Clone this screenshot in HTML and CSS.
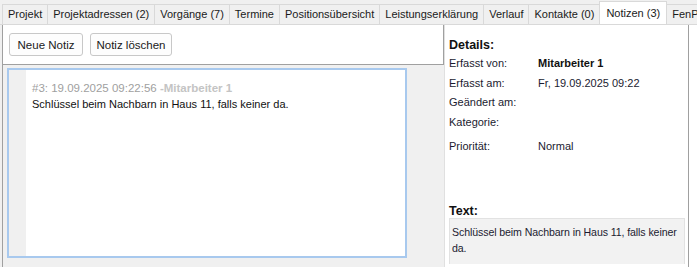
FILE: index.html
```html
<!DOCTYPE html>
<html lang="de">
<head>
    <meta charset="UTF-8">
    <title>Notizen</title>
    <link rel="stylesheet" href="styles.css">
</head>
<body>
    <div class="tabs">
        <div class="tab">Projekt</div>
        <div class="tab">Projektadressen (2)</div>
        <div class="tab">Vorgänge (7)</div>
        <div class="tab">Termine</div>
        <div class="tab">Positionsübersicht</div>
        <div class="tab">Leistungserklärung</div>
        <div class="tab">Verlauf</div>
        <div class="tab">Kontakte (0)</div>
        <div class="tab active">Notizen (3)</div>
        <div class="tab">FenPro</div>
    </div>

    <div class="page">
        <div class="left-pane">
            <div class="toolbar">
                <button class="btn btn-new">Neue Notiz</button>
                <button class="btn btn-del">Notiz löschen</button>
            </div>
            <div class="notes">
                <div class="note">
                    <div class="note-strip"></div>
                    <div class="note-body">
                        <div class="note-head">#3: 19.09.2025 09:22:56 <span class="note-author">-Mitarbeiter 1</span></div>
                        <div class="note-text">Schlüssel beim Nachbarn in Haus 11, falls keiner da.</div>
                    </div>
                </div>
            </div>
        </div>

        <div class="details">
            <div class="section-title">Details:</div>
            <div class="row"><span class="label">Erfasst von:</span><span class="value strong">Mitarbeiter 1</span></div>
            <div class="row"><span class="label">Erfasst am:</span><span class="value">Fr, 19.09.2025 09:22</span></div>
            <div class="row"><span class="label">Geändert am:</span><span class="value"></span></div>
            <div class="row"><span class="label">Kategorie:</span><span class="value"></span></div>
            <div class="row row-prio"><span class="label">Priorität:</span><span class="value">Normal</span></div>
            <div class="section-title text-title">Text:</div>
            <div class="text-box">Schlüssel beim Nachbarn in Haus 11, falls keiner da.</div>
        </div>
        <div class="edge"></div>
    </div>
</body>
</html>
```

FILE: styles.css
```css
body {
    margin: 0;
    width: 697px;
    height: 267px;
    overflow: hidden;
    background-color: #f0f0f0;
    font-family: "Liberation Sans", Arial, sans-serif;
    font-size: 11px;
    color: #1a1a1a;
}
.tabs {
    display: flex;
    align-items: flex-end;
    height: 25px;
    padding-left: 2px;
    box-sizing: border-box;
    border-bottom: 1px solid #d9d9d9;
    white-space: nowrap;
    overflow: hidden;
}
.tab {
    height: 20px;
    line-height: 19px;
    padding: 0 5px;
    box-sizing: border-box;
    border: 1px solid #d9d9d9;
    border-bottom: none;
    margin-right: -1px;
    background-color: #f0f0f0;
    flex-shrink: 0;
}
.tab.active {
    height: 24px;
    line-height: 22px;
    margin-bottom: -1px;
    padding: 0 6px;
    background-color: #fff;
}
.page {
    display: flex;
    height: 242px;
    margin-left: 2px;
    border-left: 1px solid #a0a0a0;
    overflow: hidden;
}
.left-pane {
    width: 441px;
    display: flex;
    flex-direction: column;
}
.toolbar {
    height: 40px;
    box-sizing: border-box;
    background-color: #fff;
    border-bottom: 1px solid #a0a0a0;
    border-right: 1px solid #a0a0a0;
    display: flex;
    align-items: center;
    gap: 7px;
    padding: 0 0 0 6px;
}
.btn {
    height: 23px;
    border: 1px solid #c8c8c8;
    border-radius: 3px;
    background-color: #fdfdfd;
    font-family: inherit;
    font-size: 11.5px;
    color: #1a1a1a;
    padding: 0;
}
.btn-new {
    width: 74px;
}
.btn-del {
    width: 82px;
}
.notes {
    flex: 1;
    padding: 3px 0 0 4px;
}
.note {
    width: 400px;
    height: 190px;
    box-sizing: border-box;
    border: 2px solid #a8c9ee;
    background-color: #fff;
    display: flex;
}
.note-strip {
    width: 17px;
    background-color: #f0f0f0;
}
.note-body {
    padding: 10px 0 0 6px;
}
.note-head {
    color: #a0a0a0;
    font-size: 11.5px;
    line-height: 16px;
}
.note-author {
    color: #c4c4c4;
    font-weight: bold;
}
.note-text {
    line-height: 16px;
    color: #111;
}
.details {
    width: 245px;
    box-sizing: border-box;
    background-color: #fff;
    border-left: 1px solid #e0e0e0;
    border-right: 1px solid #a0a0a0;
    padding: 12px 3px 0 4px;
    color: #1b1b30;
}
.section-title {
    font-weight: bold;
    font-size: 12.5px;
    line-height: 16px;
    margin-bottom: 2px;
    color: #111;
}
.row {
    display: flex;
    height: 19.5px;
    line-height: 16px;
}
.row-prio {
    margin-top: 5px;
}
.label {
    width: 89px;
    flex-shrink: 0;
}
.value.strong {
    font-weight: bold;
    color: #111;
}
.text-title {
    margin-top: 45px;
    margin-bottom: -1px;
}
.text-box {
    height: 46px;
    padding: 5px 2px;
    box-sizing: border-box;
    background-color: #f2f2f2;
    border: 1px solid #e2e2e2;
    border-bottom: none;
    font-size: 10.6px;
    letter-spacing: -0.1px;
    line-height: 16px;
}
.edge {
    flex: 1;
    background-color: #fff;
}
```
